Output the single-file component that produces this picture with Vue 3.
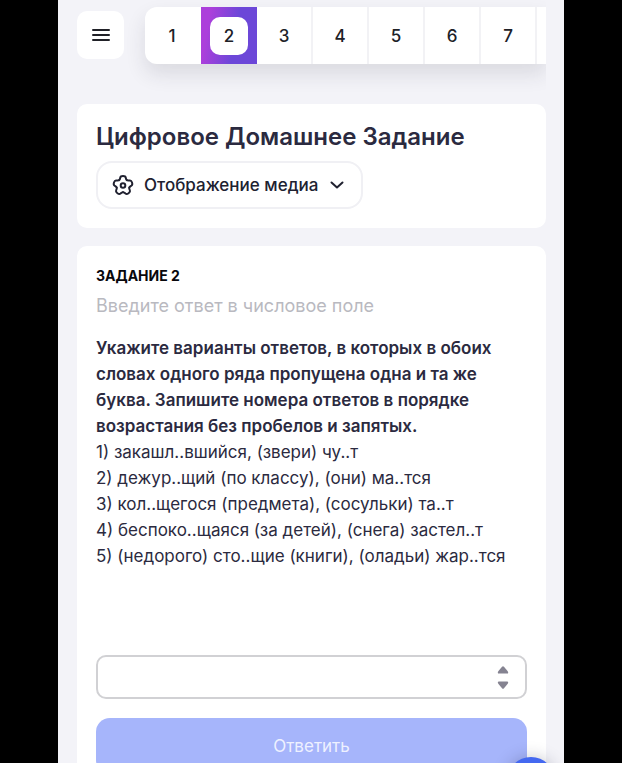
<script setup>
import { ref } from 'vue'

const tasks = [1, 2, 3, 4, 5, 6, 7]
const current = ref(2)
const answer = ref('')
const options = [
  '1) закашл..вшийся, (звери) чу..т',
  '2) дежур..щий (по классу), (они) ма..тся',
  '3) кол..щегося (предмета), (сосульки) та..т',
  '4) беспоко..щаяся (за детей), (снега) застел..т',
  '5) (недорого) сто..щие (книги), (оладьи) жар..тся',
]

function step(delta) {
  answer.value = String(Number(answer.value || 0) + delta)
}
</script>

<template>
  <div class="screen">
    <header class="topbar">
      <button class="menu" type="button" aria-label="Меню">
        <svg width="20" height="14" viewBox="0 0 20 14" fill="none" stroke="#202127" stroke-width="2" stroke-linecap="round">
          <path d="M2 2H18M2 7H18M2 12H18" />
        </svg>
      </button>
      <nav class="tasks">
        <div class="strip">
          <button
            v-for="n in tasks"
            :key="n"
            type="button"
            class="task"
            :class="{ active: n === current }"
            @click="current = n"
          >
            <span class="num">{{ n }}</span>
          </button>
        </div>
      </nav>
    </header>

    <section class="card heading">
      <h1>Цифровое Домашнее Задание</h1>
      <button class="media" type="button">
        <svg class="gear" width="22" height="22" viewBox="0 0 22 22" fill="none" stroke="#202130" stroke-width="2" stroke-linecap="round" stroke-linejoin="round">
          <path
            v-for="k in 5"
            :key="k"
            d="M7.1 6.1Q8 5.6 8.3 3.5Q8.6 2 11 2Q13.4 2 13.7 3.5Q14 5.6 14.9 6.1"
            :transform="`rotate(${k * 72} 11 11.5)`"
          />
          <circle cx="11" cy="11.5" r="2.3" />
        </svg>
        <span>Отображение медиа</span>
        <svg class="chevron" width="14" height="8" viewBox="0 0 14 8" fill="none" stroke="#202130" stroke-width="2" stroke-linecap="round" stroke-linejoin="round">
          <path d="M1.5 1.5L7 6.5L12.5 1.5" />
        </svg>
      </button>
    </section>

    <main class="card question">
      <h2>ЗАДАНИЕ {{ current }}</h2>
      <label class="hint" for="answer">Введите ответ в числовое поле</label>
      <div class="text">
        <p class="prompt">
          Укажите варианты ответов, в которых в обоих словах одного ряда пропущена одна и та же буква. Запишите номера ответов в порядке возрастания без пробелов и запятых.
        </p>
        <p v-for="line in options" :key="line">{{ line }}</p>
      </div>
      <div class="field">
        <input id="answer" v-model="answer" type="text" inputmode="numeric" />
        <div class="steps">
          <button type="button" aria-label="Увеличить" @click="step(1)">
            <svg width="12" height="8" viewBox="0 0 12 8" fill="#858391">
              <path d="M5 .8Q6 -.2 7 .8L10.7 5.2Q12 7.6 10 7.6H2Q0 7.6 1.3 5.2Z" />
            </svg>
          </button>
          <button type="button" aria-label="Уменьшить" @click="step(-1)">
            <svg width="12" height="8" viewBox="0 0 12 8" fill="#858391">
              <path d="M5 7.2Q6 8.2 7 7.2L10.7 2.8Q12 .4 10 .4H2Q0 .4 1.3 2.8Z" />
            </svg>
          </button>
        </div>
      </div>
      <button class="submit" type="button">Ответить</button>
    </main>

    <button class="chat" type="button" aria-label="Чат"></button>
  </div>
</template>

<style>
body {
  background: #000;
}
</style>

<style scoped>
* {
  box-sizing: border-box;
}

button {
  margin: 0;
  padding: 0;
  border: 0;
  font: inherit;
  cursor: pointer;
}

.screen {
  display: flex;
  flex-direction: column;
  height: 100vh;
  margin: 0 58px;
  padding: 0 18px 0 19px;
  overflow: hidden;
  background: #f3f3f8;
  font-family: Inter, "Noto Sans", sans-serif;
  color: #2b2a40;
}

.topbar {
  display: flex;
  flex: none;
  height: 104px;
}

.menu {
  display: flex;
  flex: none;
  align-items: center;
  justify-content: center;
  width: 47px;
  height: 48px;
  margin: 11px 0 0;
  border-radius: 10px;
  background: #fff;
}

.tasks {
  flex: 1;
  min-width: 0;
  padding: 7px 0 0 21px;
  overflow: hidden;
}

.strip {
  display: flex;
  height: 57px;
  border-radius: 12px 0 0 12px;
  background: #fff;
  box-shadow: 0 10px 20px rgba(40, 40, 60, 0.12);
}

.task {
  display: flex;
  flex: none;
  align-items: center;
  justify-content: center;
  width: 56px;
  border-right: 2px solid #f2f2f5;
  background: transparent;
  font-size: 17px;
  font-weight: 500;
  color: #202127;
}

.task:first-child {
  border-right-color: transparent;
}

.task.active {
  border-right: 0;
  background: linear-gradient(100deg, #ac3fdb 15%, #6c47d8 60%);
}

.num {
  display: flex;
  align-items: center;
  justify-content: center;
  width: 38px;
  height: 38px;
}

.active .num {
  border-radius: 10px;
  background: #fff;
}

.card {
  flex: none;
  border-radius: 10px;
  background: #fff;
}

.heading {
  padding: 18px 19px 19px;
}

h1 {
  margin: 0 0 9px;
  font-size: 24px;
  line-height: 30px;
  font-weight: 600;
}

.media {
  display: flex;
  align-items: center;
  height: 48px;
  padding: 0 17px 0 14px;
  border: 2px solid #f0f0f4;
  border-radius: 16px;
  background: #fff;
  font-size: 17px;
  font-weight: 500;
  color: #202130;
}

.gear {
  margin-right: 10px;
}

.chevron {
  margin-left: 12px;
}

.question {
  display: flex;
  flex-direction: column;
  margin-top: 18px;
  padding: 20px 19px;
}

h2 {
  margin: 0;
  font-size: 14px;
  line-height: 20px;
  font-weight: 700;
  color: #08080c;
}

.hint {
  margin: 8px 0 17px;
  font-size: 18px;
  line-height: 24px;
  color: #b9b9c0;
}

.text {
  min-height: 300px;
  font-size: 17px;
  line-height: 26px;
}

p {
  margin: 0;
}

.prompt {
  font-weight: 600;
}

.field {
  display: flex;
  align-items: center;
  height: 44px;
  margin: 20px 0 19px;
  border: 2px solid #d1d1d4;
  border-radius: 10px;
}

.field input {
  flex: 1;
  min-width: 0;
  height: 100%;
  padding: 0 12px;
  border: 0;
  outline: 0;
  background: transparent;
  font: inherit;
  font-size: 17px;
}

.steps {
  display: flex;
  flex-direction: column;
  gap: 7px;
  margin-right: 16px;
}

.steps button {
  display: flex;
  background: transparent;
}

.submit {
  height: 56px;
  border-radius: 14px;
  background: #a6b5fb;
  font-size: 17px;
  color: #eef1ff;
}

.chat {
  position: fixed;
  right: 67px;
  bottom: -42px;
  width: 48px;
  height: 48px;
  border-radius: 50%;
  background: #4468f0;
  box-shadow: 0 0 16px rgba(30, 30, 60, 0.25);
}
</style>
